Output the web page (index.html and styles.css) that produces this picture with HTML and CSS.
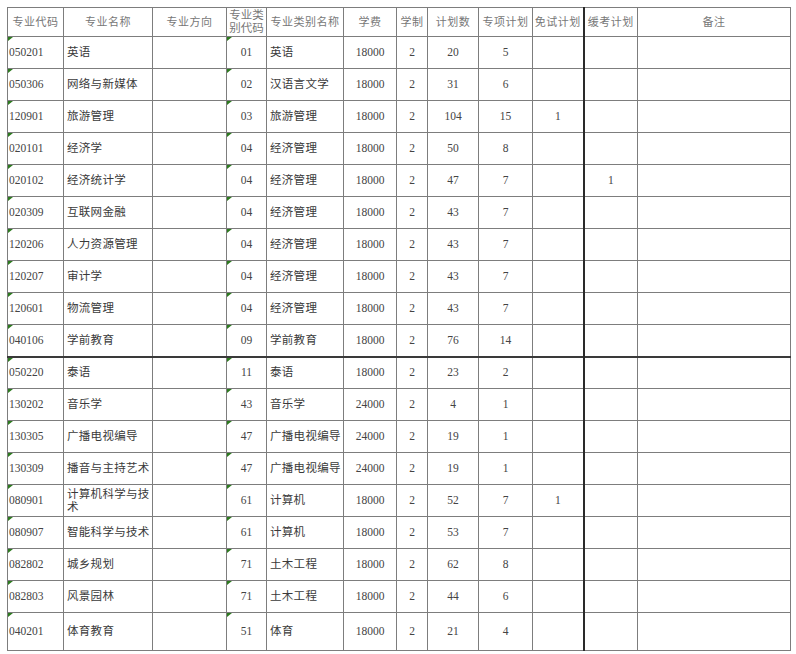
FILE: index.html
```html
<!DOCTYPE html>
<html lang="zh">
<head>
<meta charset="utf-8">
<link rel="stylesheet" href="styles.css">
</head>
<body>
<table class="plan">
  <colgroup>
    <col class="w-code"><col class="w-name"><col class="w-dir"><col class="w-cat"><col class="w-catname">
    <col class="w-fee"><col class="w-len"><col class="w-num"><col class="w-sp"><col class="w-mian"><col class="w-huan"><col class="w-note">
  </colgroup>
  <thead>
    <tr class="head">
      <th>专业代码</th><th>专业名称</th><th>专业方向</th><th class="wrap">专业类别代码</th><th>专业类别名称</th>
      <th>学费</th><th>学制</th><th>计划数</th><th>专项计划</th><th>免试计划</th><th class="split">缓考计划</th><th>备注</th>
    </tr>
  </thead>
  <tbody>
    <tr><td class="code mark">050201</td><td class="name">英语</td><td></td><td class="c mark">01</td><td class="name">英语</td><td class="c">18000</td><td class="c">2</td><td class="c">20</td><td class="c">5</td><td></td><td class="split"></td><td></td></tr>
    <tr><td class="code mark">050306</td><td class="name">网络与新媒体</td><td></td><td class="c mark">02</td><td class="name">汉语言文学</td><td class="c">18000</td><td class="c">2</td><td class="c">31</td><td class="c">6</td><td></td><td class="split"></td><td></td></tr>
    <tr><td class="code mark">120901</td><td class="name">旅游管理</td><td></td><td class="c mark">03</td><td class="name">旅游管理</td><td class="c">18000</td><td class="c">2</td><td class="c">104</td><td class="c">15</td><td class="c">1</td><td class="split"></td><td></td></tr>
    <tr><td class="code mark">020101</td><td class="name">经济学</td><td></td><td class="c mark">04</td><td class="name">经济管理</td><td class="c">18000</td><td class="c">2</td><td class="c">50</td><td class="c">8</td><td></td><td class="split"></td><td></td></tr>
    <tr><td class="code mark">020102</td><td class="name">经济统计学</td><td></td><td class="c mark">04</td><td class="name">经济管理</td><td class="c">18000</td><td class="c">2</td><td class="c">47</td><td class="c">7</td><td></td><td class="split c">1</td><td></td></tr>
    <tr><td class="code mark">020309</td><td class="name">互联网金融</td><td></td><td class="c mark">04</td><td class="name">经济管理</td><td class="c">18000</td><td class="c">2</td><td class="c">43</td><td class="c">7</td><td></td><td class="split"></td><td></td></tr>
    <tr><td class="code mark">120206</td><td class="name">人力资源管理</td><td></td><td class="c mark">04</td><td class="name">经济管理</td><td class="c">18000</td><td class="c">2</td><td class="c">43</td><td class="c">7</td><td></td><td class="split"></td><td></td></tr>
    <tr><td class="code mark">120207</td><td class="name">审计学</td><td></td><td class="c mark">04</td><td class="name">经济管理</td><td class="c">18000</td><td class="c">2</td><td class="c">43</td><td class="c">7</td><td></td><td class="split"></td><td></td></tr>
    <tr><td class="code mark">120601</td><td class="name">物流管理</td><td></td><td class="c mark">04</td><td class="name">经济管理</td><td class="c">18000</td><td class="c">2</td><td class="c">43</td><td class="c">7</td><td></td><td class="split"></td><td></td></tr>
    <tr><td class="code mark">040106</td><td class="name">学前教育</td><td></td><td class="c mark">09</td><td class="name">学前教育</td><td class="c">18000</td><td class="c">2</td><td class="c">76</td><td class="c">14</td><td></td><td class="split"></td><td></td></tr>
    <tr class="group"><td class="code mark">050220</td><td class="name">泰语</td><td></td><td class="c mark">11</td><td class="name">泰语</td><td class="c">18000</td><td class="c">2</td><td class="c">23</td><td class="c">2</td><td></td><td class="split"></td><td></td></tr>
    <tr><td class="code mark">130202</td><td class="name">音乐学</td><td></td><td class="c mark">43</td><td class="name">音乐学</td><td class="c">24000</td><td class="c">2</td><td class="c">4</td><td class="c">1</td><td></td><td class="split"></td><td></td></tr>
    <tr><td class="code mark">130305</td><td class="name">广播电视编导</td><td></td><td class="c mark">47</td><td class="name">广播电视编导</td><td class="c">24000</td><td class="c">2</td><td class="c">19</td><td class="c">1</td><td></td><td class="split"></td><td></td></tr>
    <tr><td class="code mark">130309</td><td class="name">播音与主持艺术</td><td></td><td class="c mark">47</td><td class="name">广播电视编导</td><td class="c">24000</td><td class="c">2</td><td class="c">19</td><td class="c">1</td><td></td><td class="split"></td><td></td></tr>
    <tr><td class="code mark">080901</td><td class="name">计算机科学与技术</td><td></td><td class="c mark">61</td><td class="name">计算机</td><td class="c">18000</td><td class="c">2</td><td class="c">52</td><td class="c">7</td><td class="c">1</td><td class="split"></td><td></td></tr>
    <tr><td class="code mark">080907</td><td class="name">智能科学与技术</td><td></td><td class="c mark">61</td><td class="name">计算机</td><td class="c">18000</td><td class="c">2</td><td class="c">53</td><td class="c">7</td><td></td><td class="split"></td><td></td></tr>
    <tr><td class="code mark">082802</td><td class="name">城乡规划</td><td></td><td class="c mark">71</td><td class="name">土木工程</td><td class="c">18000</td><td class="c">2</td><td class="c">62</td><td class="c">8</td><td></td><td class="split"></td><td></td></tr>
    <tr><td class="code mark">082803</td><td class="name">风景园林</td><td></td><td class="c mark">71</td><td class="name">土木工程</td><td class="c">18000</td><td class="c">2</td><td class="c">44</td><td class="c">6</td><td></td><td class="split"></td><td></td></tr>
    <tr class="last"><td class="code mark">040201</td><td class="name">体育教育</td><td></td><td class="c mark">51</td><td class="name">体育</td><td class="c">18000</td><td class="c">2</td><td class="c">21</td><td class="c">4</td><td></td><td class="split"></td><td></td></tr>
  </tbody>
</table>
</body>
</html>
```

FILE: styles.css
```css
html, body {
  margin: 0;
  padding: 0;
  background: #ffffff;
}

body {
  padding: 7px 0 0 7px;
  font-family: "Liberation Serif", "Noto Sans CJK SC", serif;
  font-size: 11.5px;
  color: #333333;
}

.plan {
  border-collapse: collapse;
  table-layout: fixed;
  width: 783px;
}

.w-code { width: 56px; }
.w-name { width: 89px; }
.w-dir { width: 74px; }
.w-cat { width: 40px; }
.w-catname { width: 77px; }
.w-fee { width: 53px; }
.w-len { width: 31px; }
.w-num { width: 51px; }
.w-sp { width: 54px; }
.w-mian { width: 51px; }
.w-huan { width: 54px; }
.w-note { width: 153px; }

.plan th,
.plan td {
  border: 1px solid #7d7d7d;
  padding: 0;
  vertical-align: middle;
  overflow: hidden;
}

.plan th {
  height: 28px;
  font-size: 11px;
  font-weight: normal;
  color: #777777;
  line-height: 13px;
  text-align: center;
  letter-spacing: 0.5px;
  white-space: nowrap;
}

.plan th.wrap {
  white-space: normal;
  letter-spacing: 0;
  font-size: 11.5px;
}

.plan tbody tr {
  height: 32px;
}

.plan tbody tr.last {
  height: 38px;
}

.plan tbody td {
  line-height: 13px;
  color: #444444;
}

.plan td.code {
  padding-left: 1px;
  text-align: left;
}

.plan td.name {
  padding-left: 3px;
  padding-right: 1px;
  text-align: left;
  color: #3a3a3a;
  letter-spacing: 0.3px;
}

.plan td.c {
  text-align: center;
}

.plan td.mark {
  position: relative;
}

.plan td.mark::before {
  content: "";
  position: absolute;
  left: 0;
  top: 0;
  width: 0;
  height: 0;
  border-top: 4px solid #2d7a1f;
  border-right: 5px solid transparent;
}

.plan .split {
  border-left: 2px solid #2a2a2a;
}

.plan tr.group td {
  border-top: 2px solid #3a3a3a;
}
```
